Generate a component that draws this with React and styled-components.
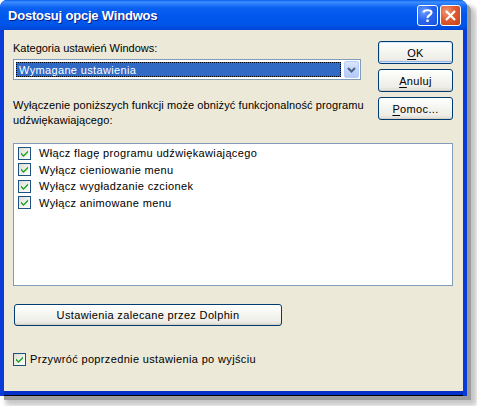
import styled, { createGlobalStyle } from "styled-components";

const GlobalStyle = createGlobalStyle`
  html, body {
    margin: 0;
    padding: 0;
    background: #fff;
  }
  body {
    font-family: Tahoma, "Liberation Sans", "DejaVu Sans", sans-serif;
    font-size: 11px;
    letter-spacing: 0.35px;
    color: #000;
  }
`;

const Page = styled.div`
  width: 477px;
  height: 406px;
  overflow: hidden;
  background: #fff;
`;

const Window = styled.div`
  width: 467px;
  height: 396px;
  display: flex;
  flex-direction: column;
  box-sizing: border-box;
  border-radius: 7px 7px 0 0;
  box-shadow: 4px 4px 0 0 #9c9c9c, 7px 7px 4px 1px #c4c4c4, 9px 9px 6px 2px #e2e2e2;
  background: #0a3bd8;
`;

const TitleBar = styled.div`
  height: 30px;
  flex: none;
  display: flex;
  align-items: center;
  padding: 0 6px 0 8px;
  box-sizing: border-box;
  border-radius: 7px 7px 0 0;
  background: linear-gradient(
    to bottom,
    #0a5fe8 0px,
    #3d8eff 2px,
    #2a7cfb 4px,
    #0a60f0 8px,
    #0058ee 15px,
    #0055ea 24px,
    #004ddf 28px,
    #0343d6 30px
  );
`;

const Title = styled.div`
  flex: 1;
  color: #fff;
  font-family: "Liberation Sans", "DejaVu Sans", sans-serif;
  font-weight: bold;
  font-size: 13px;
  letter-spacing: -0.2px;
  text-shadow: 1px 1px 0 #0a1f8c;
`;

const CaptionButton = styled.div`
  width: 21px;
  height: 21px;
  margin-left: 2px;
  box-sizing: border-box;
  border: 1px solid #fff;
  border-radius: 3px;
  display: flex;
  align-items: center;
  justify-content: center;
  background: ${(p) =>
    p.$close
      ? "radial-gradient(circle at 30% 30%, #f09a7a 0%, #e05a32 45%, #c9401c 100%)"
      : "radial-gradient(circle at 30% 30%, #6ea0ff 0%, #2a66f0 45%, #1a4fd8 100%)"};
`;

const Body = styled.div`
  flex: 1;
  display: flex;
  flex-direction: column;
  background: #ece9d8;
  margin: 0 4px 1px 4px;
  padding: 9px 10px 0 9px;
  border-bottom: 4px solid #0530c8;
  box-shadow: 0 1px 0 0 #000;
`;

const TopRow = styled.div`
  display: flex;
`;

const LeftCol = styled.div`
  flex: 1;
  min-width: 0;
  display: flex;
  flex-direction: column;
`;

const Label = styled.div`
  line-height: 13px;
  margin-top: 3px;
  letter-spacing: 0;
`;

const Combo = styled.div`
  margin-top: 4px;
  height: 21px;
  box-sizing: border-box;
  border: 1px solid #7f9db9;
  background: #fff;
  display: flex;
  padding: 2px 1px 2px 2px;
`;

const ComboValue = styled.div`
  flex: 1;
  background: #316ac5;
  color: #fff;
  box-sizing: border-box;
  border: 1px dotted #e0a030;
  outline: 1px dotted #000;
  outline-offset: -1px;
  display: flex;
  align-items: center;
  padding-left: 2px;
`;

const ComboButton = styled.div`
  width: 15px;
  margin-left: 3px;
  margin-top: -1px;
  margin-bottom: -1px;
  box-sizing: border-box;
  border: 1px solid #bacdf6;
  border-radius: 2px;
  background: linear-gradient(to bottom, #dbe6fd, #c0d3fb 60%, #b3c9fa);
  display: flex;
  align-items: center;
  justify-content: center;
`;

const Description = styled.div`
  margin-top: 18px;
  line-height: 15px;
  letter-spacing: 0.1px;
  white-space: nowrap;
`;

const RightCol = styled.div`
  flex: none;
  width: 75px;
  margin-left: 17px;
  margin-top: 2px;
  display: flex;
  flex-direction: column;
  gap: 5px;
`;

const Button = styled.div`
  height: ${(p) => (p.$h ? p.$h : 23)}px;
  width: ${(p) => (p.$w ? `${p.$w}px` : "auto")};
  box-sizing: border-box;
  border: 1px solid #003c74;
  border-radius: 3px;
  background: linear-gradient(to bottom, #ffffff 0%, #f6f6f2 40%, #efeee8 80%, #dedcd2 100%);
  box-shadow: ${(p) =>
    p.$default
      ? "inset 0 0 0 1px #cee7ff, inset 0 -1px 0 1px #98b8ea"
      : "inset 0 -1px 0 0 #d6d0c5"};
  display: flex;
  align-items: center;
  justify-content: center;
  u {
    text-decoration: underline;
    text-underline-offset: 2px;
  }
`;

const ListBox = styled.div`
  margin-top: 15px;
  height: 143px;
  box-sizing: border-box;
  border: 1px solid #7f9db9;
  background: #fff;
  padding: 1px 3px;
  display: flex;
  flex-direction: column;
`;

const CheckRow = styled.div`
  display: flex;
  align-items: center;
  height: 16.5px;
  gap: ${(p) => (p.$tight ? 4 : 8)}px;
  padding-left: ${(p) => (p.$tight ? 0 : 1)}px;
`;

const Box = styled.div`
  width: 13px;
  height: 13px;
  flex: none;
  box-sizing: border-box;
  border: 1px solid #1c5180;
  background: linear-gradient(135deg, #dcdcd7 0%, #f0f0ea 50%, #fff 100%);
  display: flex;
  align-items: center;
  justify-content: center;
`;

const DolphinButton = styled(Button)`
  margin-top: 18px;
  margin-left: 1px;
`;

const BottomCheck = styled.div`
  margin-top: 25px;
`;

function Check() {
  return (
    <Box>
      <svg width="9" height="9" viewBox="0 0 9 9">
        <path d="M1 3.5 L3.5 6 L8 1.5 L8 3.5 L3.5 8 L1 5.5 Z" fill="#21a121" />
      </svg>
    </Box>
  );
}

const options = [
  "Włącz flagę programu udźwiękawiającego",
  "Wyłącz cieniowanie menu",
  "Wyłącz wygładzanie czcionek",
  "Wyłącz animowane menu",
];

export default function App() {
  return (
    <Page>
      <GlobalStyle />
      <Window>
        <TitleBar>
          <Title>Dostosuj opcje Windwos</Title>
          <CaptionButton>
            <svg width="13" height="15" viewBox="0 0 13 15">
              <path
                d="M2.5 4.5 C2.5 1.5 10.5 1.5 10.5 4.5 C10.5 7 6.5 7 6.5 10"
                fill="none"
                stroke="#fff"
                strokeWidth="2.2"
              />
              <rect x="5.3" y="11.5" width="2.4" height="2.4" fill="#fff" />
            </svg>
          </CaptionButton>
          <CaptionButton $close>
            <svg width="13" height="13" viewBox="0 0 13 13">
              <path d="M2 2 L11 11 M11 2 L2 11" stroke="#fff" strokeWidth="2.2" />
            </svg>
          </CaptionButton>
        </TitleBar>
        <Body>
          <TopRow>
            <LeftCol>
              <Label>Kategoria ustawień Windows:</Label>
              <Combo>
                <ComboValue>Wymagane ustawienia</ComboValue>
                <ComboButton>
                  <svg width="9" height="6" viewBox="0 0 9 6">
                    <path d="M1 1 L4.5 4.5 L8 1" fill="none" stroke="#4d6185" strokeWidth="2" />
                  </svg>
                </ComboButton>
              </Combo>
              <Description>
                Wyłączenie poniższych funkcji może obniżyć funkcjonalność programu
                <br />
                udźwiękawiającego:
              </Description>
            </LeftCol>
            <RightCol>
              <Button $default>
                <span>
                  <u>O</u>K
                </span>
              </Button>
              <Button>
                <span>
                  <u>A</u>nuluj
                </span>
              </Button>
              <Button>
                <span>
                  <u>P</u>omoc...
                </span>
              </Button>
            </RightCol>
          </TopRow>
          <ListBox>
            {options.map((o) => (
              <CheckRow key={o}>
                <Check />
                <span>{o}</span>
              </CheckRow>
            ))}
          </ListBox>
          <DolphinButton $w={268} $h={22}>
            Ustawienia zalecane przez Dolphin
          </DolphinButton>
          <BottomCheck>
            <CheckRow $tight>
              <Check />
              <span>Przywróć poprzednie ustawienia po wyjściu</span>
            </CheckRow>
          </BottomCheck>
        </Body>
      </Window>
    </Page>
  );
}
